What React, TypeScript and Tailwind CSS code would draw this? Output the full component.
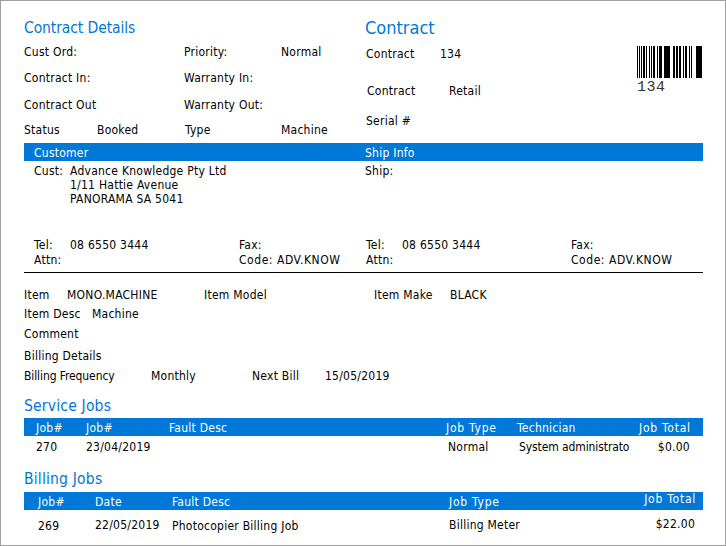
import { clsx } from "clsx";

const bars = [
  [0, 1], [2, 1], [4, 1], [6, 2], [9, 1], [12, 1], [14, 1], [16, 2], [20, 1], [22, 3], [27, 6], [36, 2], [39, 2], [42, 2], [46, 1], [48, 2], [52, 1], [54, 1], [59, 6],
];

function Heading({ children, className }: { children: React.ReactNode; className?: string }) {
  return <h2 className={clsx("text-[15.5px] leading-[20px] text-[#0078d7]", className)}>{children}</h2>;
}

function Barcode() {
  return (
    <svg width="65" height="32" viewBox="0 0 65 32" shapeRendering="crispEdges">
      {bars.map(([x, w]) => (
        <rect key={x} x={x} y="0" width={w} height="32" fill="#000" />
      ))}
    </svg>
  );
}

function Party({ label, lines }: { label: string; lines: string[] }) {
  return (
    <div className="flex h-[68px] items-start">
      <span className="w-[36px]">{label}</span>
      <div className="flex flex-col leading-[14px]">
        {lines.map((l) => (
          <span key={l}>{l}</span>
        ))}
      </div>
    </div>
  );
}

function Contact() {
  return (
    <div className="grid grid-cols-[205px_1fr] leading-[15px]">
      <div className="flex flex-col">
        <div className="flex">
          <span className="w-[36px]">Tel:</span>
          <span>08 6550 3444</span>
        </div>
        <span>Attn:</span>
      </div>
      <div className="flex flex-col">
        <span>Fax:</span>
        <span className="tracking-[0.55px]">Code: ADV.KNOW</span>
      </div>
    </div>
  );
}

export default function App() {
  return (
    <div className="box-border h-[546px] w-[726px] overflow-hidden border border-[#a0a0a0] bg-white pl-[23px] pr-[22px] pt-[17px] font-['DejaVu_Sans',sans-serif] text-[12px] leading-[14px] tracking-[0.25px] text-black [font-stretch:condensed]">
      <div className="grid h-[125px] grid-cols-[341px_1fr]">
        <div className="flex flex-col">
          <Heading className="tracking-[-0.1px]">Contract Details</Heading>
          <div className="mt-[7px] grid h-[26px] grid-cols-[160px_97px_1fr]">
            <span>Cust Ord:</span>
            <span>Priority:</span>
            <span>Normal</span>
          </div>
          <div className="grid h-[27px] grid-cols-[160px_1fr]">
            <span>Contract In:</span>
            <span>Warranty In:</span>
          </div>
          <div className="grid h-[25px] grid-cols-[160px_1fr]">
            <span>Contract Out</span>
            <span>Warranty Out:</span>
          </div>
          <div className="grid grid-cols-[73px_88px_96px_1fr]">
            <span>Status</span>
            <span>Booked</span>
            <span>Type</span>
            <span>Machine</span>
          </div>
        </div>
        <div className="flex justify-between">
          <div className="flex flex-col">
            <h2 className="text-[18px] leading-[20px] tracking-normal text-[#0078d7]">Contract</h2>
            <div className="mt-[9px] grid h-[37px] grid-cols-[74px_1fr] pl-px">
              <span>Contract</span>
              <span>134</span>
            </div>
            <div className="grid h-[30px] grid-cols-[82px_1fr] pl-[2px]">
              <span>Contract</span>
              <span>Retail</span>
            </div>
            <span className="pl-px">Serial #</span>
          </div>
          <div className="mr-px mt-[28px] flex flex-col">
            <Barcode />
            <span className="mt-[2px] font-['Liberation_Mono',monospace] text-[15px] leading-[16px] tracking-[0.5px] text-[#333333]">134</span>
          </div>
        </div>
      </div>

      <div className="grid h-[18px] grid-cols-[331px_1fr] items-center bg-[#0078d7] pl-[10px] pt-px text-white">
        <span>Customer</span>
        <span>Ship Info</span>
      </div>

      <div className="grid h-[112px] grid-cols-[331px_1fr] border-b border-black pl-[10px] pt-[3px]">
        <div className="flex flex-col">
          <Party label="Cust:" lines={["Advance Knowledge Pty Ltd", "1/11 Hattie Avenue", "PANORAMA SA 5041"]} />
          <div className="mt-[6px]">
            <Contact />
          </div>
        </div>
        <div className="flex flex-col">
          <Party label="Ship:" lines={[]} />
          <div className="ml-px mt-[6px]">
            <Contact />
          </div>
        </div>
      </div>

      <div className="mt-[15px] grid h-[19px] grid-cols-[43px_137px_170px_76px_1fr]">
        <span>Item</span>
        <span>MONO.MACHINE</span>
        <span>Item Model</span>
        <span>Item Make</span>
        <span>BLACK</span>
      </div>
      <div className="grid h-[20px] grid-cols-[68px_1fr]">
        <span>Item Desc</span>
        <span>Machine</span>
      </div>
      <div className="h-[22px]">Comment</div>
      <div className="h-[20px]">Billing Details</div>
      <div className="grid h-[27px] grid-cols-[127px_101px_73px_1fr]">
        <span className="tracking-[-0.1px]">Billing Frequency</span>
        <span>Monthly</span>
        <span>Next Bill</span>
        <span>15/05/2019</span>
      </div>

      <Heading className="tracking-[0.2px]">Service Jobs</Heading>
      <div className="mt-[2px] grid h-[18px] grid-cols-[50px_360px_71px_122px_1fr] items-center bg-[#0078d7] pl-[12px] pt-px text-white">
        <span>Job#</span>
        <span className="flex">
          <span className="w-[83px]">Job#</span>
          <span>Fault Desc</span>
        </span>
        <span className="tracking-[0.75px]">Job Type</span>
        <span>Technician</span>
        <span className="tracking-[0.75px]">Job Total</span>
      </div>
      <div className="grid h-[33px] grid-cols-[50px_362px_71px_1fr_auto] pl-[12px] pr-[13px] pt-[4px]">
        <span>270</span>
        <span>23/04/2019</span>
        <span>Normal</span>
        <span className="tracking-[-0.1px]">System administrato</span>
        <span>$0.00</span>
      </div>

      <Heading className="tracking-[0.2px]">Billing Jobs</Heading>
      <div className="mt-[3px] grid h-[18px] grid-cols-[57px_77px_277px_1fr_auto] items-center bg-[#0078d7] pl-[14px] pr-[7px] pt-px text-white">
        <span>Job#</span>
        <span>Date</span>
        <span>Fault Desc</span>
        <span className="tracking-[0.75px]">Job Type</span>
        <span className="-mt-[5px] tracking-[0.75px]">Job Total</span>
      </div>
      <div className="grid h-[32px] grid-cols-[57px_77px_277px_1fr_auto] items-center pl-[14px] pr-[8px]">
        <span>269</span>
        <span className="-mt-[3px]">22/05/2019</span>
        <span>Photocopier Billing Job</span>
        <span className="-mt-[2px]">Billing Meter</span>
        <span className="-mt-[5px]">$22.00</span>
      </div>
    </div>
  );
}
